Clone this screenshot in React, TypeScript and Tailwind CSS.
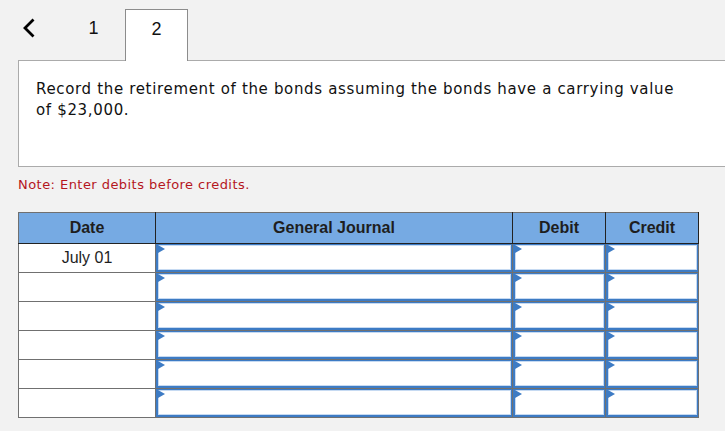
import React from "react";

const rows = ["July 01", "", "", "", "", ""];

const Field = () => (
  <div className="relative w-full h-[28px] bg-white border border-[#3d7bc4] border-l-2 border-b-2 shadow-[inset_0_0_0_1px_#c6daf2]">
    <svg className="absolute left-0 top-0" width="7" height="8" viewBox="0 0 7 8">
      <polygon points="0,0 7,4 0,8" fill="#3d7bc4" />
    </svg>
  </div>
);

export default function App() {
  return (
    <div className="w-[725px] h-[431px] overflow-hidden bg-[#f2f2f2] font-['Liberation_Sans',Arial,sans-serif]">
      {/* tabs */}
      <div className="flex items-end h-[60px] pl-[18px]">
        <div className="w-[44px] h-[51px] flex items-center pl-[4px] pb-[13px]">
          <svg width="14" height="20" viewBox="0 0 14 20">
            <polyline points="11.5,1.5 3,10 11.5,18.5" fill="none" stroke="#000" strokeWidth="2.8" />
          </svg>
        </div>
        <div className="w-[63px] h-[51px] flex items-center justify-center text-[18px] text-[#111] pb-[13px]">1</div>
        <div className="relative z-10 -mb-px w-[63px] h-[52px] bg-white border border-b-0 border-[#8c8c8c] flex items-center justify-center text-[18px] text-[#111] pb-[13px]">
          2
        </div>
      </div>

      {/* question */}
      <div className="ml-[18px] -mr-[4px] h-[107px] bg-white border border-[#ababab] pt-[18px] pl-[17px] font-['DejaVu_Sans',Verdana,sans-serif] text-[15px] leading-[21px] tracking-[0.66px] text-[#111]">
        Record the retirement of the bonds assuming the bonds have a carrying value
        <br />
        of $23,000.
      </div>

      <p className="ml-[18px] mt-[9px] font-['DejaVu_Sans',Verdana,sans-serif] text-[13px] leading-[18px] tracking-[0.45px] text-[#b5161e]">
        Note: Enter debits before credits.
      </p>

      {/* journal table */}
      <table className="ml-[18px] mt-[18px] border-collapse table-fixed w-[681px]">
        <thead>
          <tr className="h-[31px] bg-[#76aae3] text-[16px] font-bold text-[#1e1e1e]">
            <th className="w-[137px] border border-[#707070] border-b-[#222] border-r-[#222]">Date</th>
            <th className="w-[357px] border border-[#707070] border-b-[#222] border-r-[#222]">General Journal</th>
            <th className="w-[93px] border border-[#707070] border-b-[#222] border-r-[#222]">Debit</th>
            <th className="w-[93px] border border-[#707070] border-b-[#222] border-r-[#222]">Credit</th>
          </tr>
        </thead>
        <tbody>
          {rows.map((d, i) => (
            <tr key={i} className="h-[29px] bg-white">
              <td className="border border-[#707070] text-center text-[16px] text-[#1e1e1e] align-middle">{d}</td>
              <td className="border border-[#707070] p-0 align-middle">
                <Field />
              </td>
              <td className="border border-[#707070] p-0 align-middle">
                <Field />
              </td>
              <td className="border border-[#707070] p-0 align-middle">
                <Field />
              </td>
            </tr>
          ))}
        </tbody>
      </table>
    </div>
  );
}
